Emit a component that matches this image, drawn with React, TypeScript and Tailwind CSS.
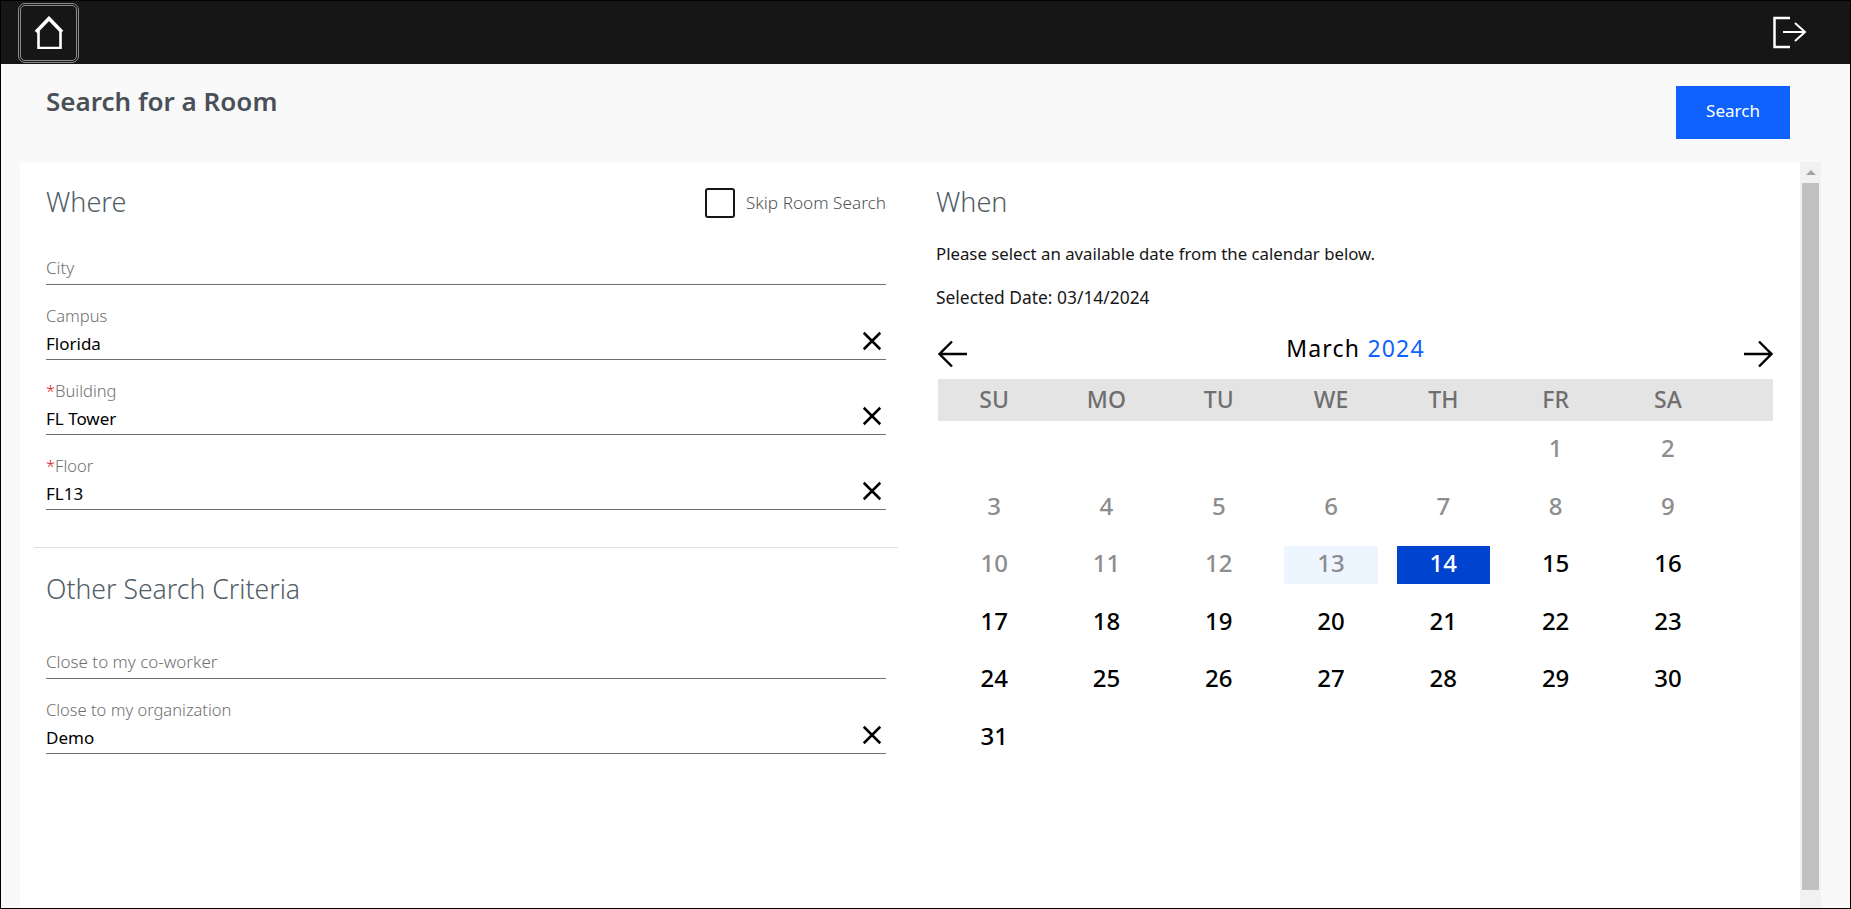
import React from 'react';

const days: { d: number; off?: boolean }[] = [];
for (let i = 1; i <= 31; i++) days.push({ d: i, off: i < 15 });

const week = ['SU', 'MO', 'TU', 'WE', 'TH', 'FR', 'SA'];

const CloseIcon = () => (
  <svg width="22" height="22" viewBox="0 0 20 20" fill="none" stroke="#000" strokeWidth="2.3">
    <path d="M2.5 2.5 L17.5 17.5 M17.5 2.5 L2.5 17.5" />
  </svg>
);

const Field = ({ label, value, req, className }: { label: string; value?: string; req?: boolean; className?: string }) => (
  <div className={`relative w-[840px] border-b border-[#6f6f6f] ${className || ''}`}>
    {value ? (
      <>
        <div className="h-[29px] text-[16.5px] leading-[29px] font-light text-[#6f6f6f]">
          {req && <span className="text-[#da1e28]">*</span>}
          {label}
        </div>
        <div className="h-[29px] text-[17px] leading-[28px] text-black">{value}</div>
        <button className="absolute right-[3px] top-[29px]"><CloseIcon /></button>
      </>
    ) : (
      <div className="h-[30px] text-[17px] leading-[28px] font-light text-[#6f6f6f]">{label}</div>
    )}
  </div>
);

export default function App() {
  return (
    <div className="w-[1851px] h-[909px] border border-black bg-[#f9f9f9] flex flex-col overflow-hidden font-['Noto_Sans',sans-serif]">
      <header className="h-[63px] shrink-0 bg-[#161616] flex items-center justify-between pl-[17px] pr-[43px]">
        <button className="w-[61px] h-[60px] rounded-[7px] border-[3px] border-double border-[#8d8d8d] flex items-center justify-center">
          <svg width="30" height="33" viewBox="0 0 30 33" fill="none" stroke="#fff">
            <path d="M2 16 L15 2.5 L28 16" strokeWidth="3.6" />
            <path d="M4.5 15 V32 H26.5 V15" strokeWidth="2.6" />
          </svg>
        </button>
        <button>
          <svg width="35" height="35" viewBox="0 0 35 35" fill="none" stroke="#fff" strokeWidth="2">
            <path d="M18 3 H2.5 V32 H18" strokeWidth="2.5" />
            <path d="M11 17 H33 M23 8 L33 17 L23 26" />
          </svg>
        </button>
      </header>

      <div className="h-[98px] shrink-0 flex justify-between pl-[45px] pr-[60px]">
        <h1 className="mt-[19px] text-[26px] leading-[36px] font-semibold text-[#4a5057]">Search for a Room</h1>
        <button className="mt-[22px] w-[114px] h-[53px] pb-[3px] bg-[#0f62fe] text-white text-[17px]">Search</button>
      </div>

      <div className="flex-1 flex ml-[19px] mr-[29px] bg-white min-h-0">
        <div className="flex-1 flex min-w-0">
          <section className="w-[879px] shrink-0 pl-[14px] pt-[20px]">
            <div className="w-[840px] ml-[12px]">
              <div className="flex items-center justify-between h-[40px]">
                <h2 className="text-[27px] font-light text-[#525d66]">Where</h2>
                <label className="flex items-center gap-[11px] pt-[2px] text-[17.2px] font-light text-[#525252]">
                  <span className="w-[30px] h-[30px] rounded-[3px] border-2 border-[#161616]" />
                  Skip Room Search
                </label>
              </div>
              <Field label="City" className="mt-[32px]" />
              <Field label="Campus" value="Florida" className="mt-[16px]" />
              <Field label="Building" value="FL Tower" req className="mt-[16px]" />
              <Field label="Floor" value="FL13" req className="mt-[16px]" />
            </div>
            <div className="h-px w-[864px] bg-[#e0e0e0] mt-[37px]" />
            <div className="ml-[12px]">
              <h2 className="mt-[21px] text-[26.6px] leading-[40px] font-light text-[#525d66]">Other Search Criteria</h2>
              <Field label="Close to my co-worker" className="mt-[39px]" />
              <Field label="Close to my organization" value="Demo" className="mt-[16px]" />
            </div>
          </section>

          <section className="flex-1 pl-[37px] pt-[20px] pr-[27px]">
            <h2 className="h-[40px] text-[27px] font-light text-[#525d66]">When</h2>
            <p className="mt-[20px] text-[16.8px] leading-[24px] text-[#161616]">Please select an available date from the calendar below.</p>
            <p className="mt-[19px] text-[17.4px] leading-[24px] text-[#161616]">Selected Date: 03/14/2024</p>
            <div className="ml-[2px] mt-[24px]">
              <div className="flex items-start justify-between h-[46px]">
                <svg width="30" height="28" viewBox="0 0 30 28" fill="none" stroke="#000" strokeWidth="2.4" className="mt-[7px]">
                  <path d="M29 14 H2 M14 1.5 L1.5 14 L14 26.5" />
                </svg>
                <div className="text-[23px] leading-[30px] tracking-[1.2px] text-black">March <span className="text-[#0f62fe]">2024</span></div>
                <svg width="30" height="28" viewBox="0 0 30 28" fill="none" stroke="#000" strokeWidth="2.4" className="mt-[7px]">
                  <path d="M1 14 H28 M16 1.5 L28.5 14 L16 26.5" />
                </svg>
              </div>
              <div className="h-[42px] pb-[2px] bg-[#e4e4e4] grid grid-cols-[repeat(7,112.3px)] items-center">
                {week.map(w => (
                  <div key={w} className="text-center text-[23px] font-medium text-[#6f6f6f]">{w}</div>
                ))}
              </div>
              <div className="grid grid-cols-[repeat(7,112.3px)] auto-rows-[57.5px] items-center">
                {days.map((x, i) => (
                  <div
                    key={x.d}
                    className={`mx-[9.5px] h-[38px] pb-[3px] flex items-center justify-center text-[24px] font-medium ${x.d === 14 ? 'bg-[#0043ce] text-white' : x.d === 13 ? 'bg-[#edf5ff] text-[#8d8d8d]' : x.off ? 'text-[#8d8d8d]' : 'text-black'} ${i === 0 ? 'col-start-6' : ''}`}
                  >
                    {x.d}
                  </div>
                ))}
              </div>
            </div>
          </section>
        </div>

        <div className="w-[21px] shrink-0 bg-[#f1f1f1] flex flex-col items-center">
          <div className="h-[21px] flex items-center justify-center">
            <div className="w-0 h-0 border-x-[5px] border-x-transparent border-b-[5px] border-b-[#a3a3a3]" />
          </div>
          <div className="w-[17px] h-[707px] bg-[#c1c1c1]" />
        </div>
      </div>
    </div>
  );
}
